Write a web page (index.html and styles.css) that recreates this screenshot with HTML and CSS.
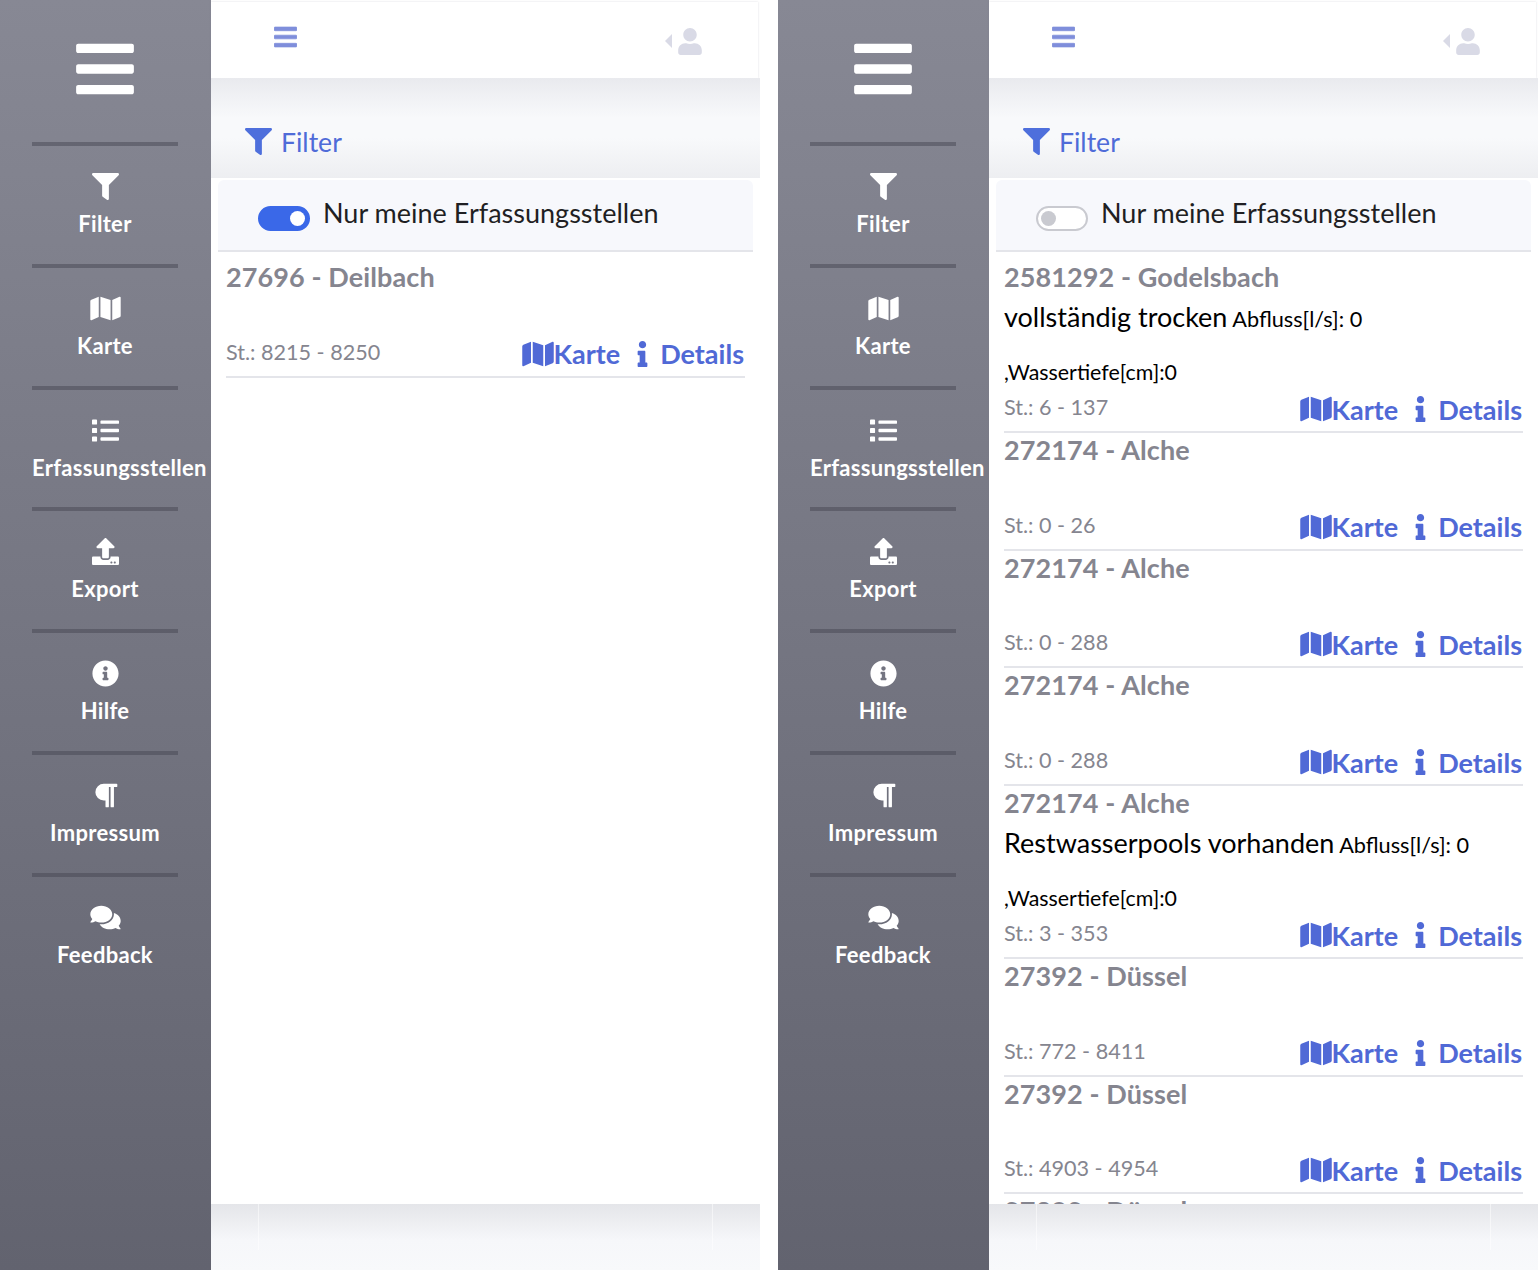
FILE: index.html
```html
<!DOCTYPE html>
<html lang="de">
<head>
  <meta charset="UTF-8" />
  <meta name="viewport" content="width=device-width, initial-scale=1" />
  <title>Erfassungsstellen</title>
  <link rel="stylesheet" href="styles.css">
</head>
<body>

<svg class="sprite" width="0" height="0">
  <symbol id="i-bars" viewBox="0 0 448 512"><path d="M16 132h416c8.837 0 16-7.163 16-16V76c0-8.837-7.163-16-16-16H16C7.163 60 0 67.163 0 76v40c0 8.837 7.163 16 16 16zm0 160h416c8.837 0 16-7.163 16-16v-40c0-8.837-7.163-16-16-16H16c-8.837 0-16 7.163-16 16v40c0 8.837 7.163 16 16 16zm0 160h416c8.837 0 16-7.163 16-16v-40c0-8.837-7.163-16-16-16H16c-8.837 0-16 7.163-16 16v40c0 8.837 7.163 16 16 16z"/></symbol>
  <symbol id="i-filter" viewBox="0 0 512 512"><path d="M487.976 0H24.028C2.71 0-8.047 25.866 7.058 40.971L192 225.941V432c0 7.831 3.821 15.17 10.237 19.662l80 55.98C298.02 518.69 320 507.493 320 487.98V225.941l184.947-184.97C520.021 25.896 509.338 0 487.976 0z"/></symbol>
  <symbol id="i-map" viewBox="0 0 576 512"><path d="M0 117.66v346.32c0 11.32 11.43 19.06 21.94 14.86L160 416V32L20.12 87.95A32.006 32.006 0 0 0 0 117.66zM192 416l192 64V96L192 32v384zM554.06 33.16L416 96v384l139.88-55.95A31.996 31.996 0 0 0 576 394.34V48.02c0-11.32-11.43-19.06-21.94-14.86z"/></symbol>
  <symbol id="i-list" viewBox="0 0 512 512"><path d="M80 368H16a16 16 0 0 0-16 16v64a16 16 0 0 0 16 16h64a16 16 0 0 0 16-16v-64a16 16 0 0 0-16-16zm0-320H16A16 16 0 0 0 0 64v64a16 16 0 0 0 16 16h64a16 16 0 0 0 16-16V64a16 16 0 0 0-16-16zm0 160H16a16 16 0 0 0-16 16v64a16 16 0 0 0 16 16h64a16 16 0 0 0 16-16v-64a16 16 0 0 0-16-16zm416 176H176a16 16 0 0 0-16 16v32a16 16 0 0 0 16 16h320a16 16 0 0 0 16-16v-32a16 16 0 0 0-16-16zm0-320H176a16 16 0 0 0-16 16v32a16 16 0 0 0 16 16h320a16 16 0 0 0 16-16V80a16 16 0 0 0-16-16zm0 160H176a16 16 0 0 0-16 16v32a16 16 0 0 0 16 16h320a16 16 0 0 0 16-16v-32a16 16 0 0 0-16-16z"/></symbol>
  <symbol id="i-upload" viewBox="0 0 512 512"><path d="M296 384h-80c-13.3 0-24-10.7-24-24V192h-87.7c-17.8 0-26.7-21.5-14.1-34.1L242.3 5.7c7.5-7.5 19.8-7.5 27.3 0l152.2 152.2c12.6 12.6 3.7 34.1-14.1 34.1H320v168c0 13.3-10.7 24-24 24zm216-8v112c0 13.3-10.7 24-24 24H24c-13.3 0-24-10.7-24-24V376c0-13.3 10.7-24 24-24h136v8c0 30.9 25.1 56 56 56h80c30.9 0 56-25.1 56-56v-8h136c13.3 0 24 10.7 24 24zm-124 88c0-11-9-20-20-20s-20 9-20 20 9 20 20 20 20-9 20-20zm64 0c0-11-9-20-20-20s-20 9-20 20 9 20 20 20 20-9 20-20z"/></symbol>
  <symbol id="i-info-circle" viewBox="0 0 512 512"><path d="M256 8C119.043 8 8 119.083 8 256c0 136.997 111.043 248 248 248s248-111.003 248-248C504 119.083 392.957 8 256 8zm0 110c23.196 0 42 18.804 42 42s-18.804 42-42 42-42-18.804-42-42 18.804-42 42-42zm56 254c0 6.627-5.373 12-12 12h-88c-6.627 0-12-5.373-12-12v-24c0-6.627 5.373-12 12-12h12v-64h-12c-6.627 0-12-5.373-12-12v-24c0-6.627 5.373-12 12-12h64c6.627 0 12 5.373 12 12v100h12c6.627 0 12 5.373 12 12v24z"/></symbol>
  <symbol id="i-paragraph" viewBox="0 0 448 512"><path d="M448 48v32a16 16 0 0 1-16 16h-48v368a16 16 0 0 1-16 16h-32a16 16 0 0 1-16-16V96h-32v368a16 16 0 0 1-16 16h-32a16 16 0 0 1-16-16V352h-32a160 160 0 0 1 0-320h240a16 16 0 0 1 16 16z"/></symbol>
  <symbol id="i-comments" viewBox="0 0 576 512"><path d="M416 192c0-88.4-93.1-160-208-160S0 103.6 0 192c0 34.3 14.1 65.9 38 92-13.4 30.2-35.5 54.2-35.8 54.5-2.2 2.3-2.8 5.7-1.5 8.7S4.8 352 8 352c36.6 0 66.9-12.3 88.7-25 32.2 15.7 70.3 25 111.3 25 114.9 0 208-71.6 208-160zm122 220c23.9-26 38-57.7 38-92 0-66.9-53.5-124.2-129.3-148.1.9 6.6 1.3 13.3 1.3 20.1 0 105.9-107.7 192-240 192-10.8 0-21.3-.8-31.7-1.9C207.8 439.6 281.8 480 368 480c41 0 79.1-9.2 111.3-25 21.8 12.7 52.1 25 88.7 25 3.2 0 6.1-1.9 7.3-4.8 1.3-2.9.7-6.3-1.5-8.7-.3-.3-22.4-24.2-35.8-54.5z"/></symbol>
  <symbol id="i-info" viewBox="0 0 192 512"><path d="M20 424.229h20V279.771H20c-11.046 0-20-8.954-20-20V212c0-11.046 8.954-20 20-20h112c11.046 0 20 8.954 20 20v212.229h20c11.046 0 20 8.954 20 20V492c0 11.046-8.954 20-20 20H20c-11.046 0-20-8.954-20-20v-47.771c0-11.046 8.954-20 20-20zM96 0C56.235 0 24 32.235 24 72s32.235 72 72 72 72-32.235 72-72S135.764 0 96 0z"/></symbol>
  <symbol id="i-user" viewBox="0 0 448 512"><path d="M224 256c70.7 0 128-57.3 128-128S294.7 0 224 0 96 57.3 96 128s57.3 128 128 128zm89.6 32h-16.7c-22.2 10.2-46.9 16-72.9 16s-50.6-5.8-72.9-16h-16.7C60.2 288 0 348.2 0 422.4V464c0 26.5 21.5 48 48 48h352c26.5 0 48-21.5 48-48v-41.6c0-74.2-60.2-134.4-134.4-134.4z"/></symbol>
</svg>

<div class="screens">

  <!-- Ansicht: nur meine -->
  <section class="phone">
    <aside class="sidebar">
      <svg class="logo-bars"><use href="#i-bars"/></svg>
      <nav>
        <div class="nav-item"><span class="nav-icon"><svg><use href="#i-filter"/></svg></span><span class="nav-label">Filter</span></div>
        <div class="nav-item"><span class="nav-icon"><svg><use href="#i-map"/></svg></span><span class="nav-label">Karte</span></div>
        <div class="nav-item"><span class="nav-icon"><svg><use href="#i-list"/></svg></span><span class="nav-label">Erfassungsstellen</span></div>
        <div class="nav-item"><span class="nav-icon"><svg><use href="#i-upload"/></svg></span><span class="nav-label">Export</span></div>
        <div class="nav-item"><span class="nav-icon"><svg><use href="#i-info-circle"/></svg></span><span class="nav-label">Hilfe</span></div>
        <div class="nav-item"><span class="nav-icon"><svg><use href="#i-paragraph"/></svg></span><span class="nav-label">Impressum</span></div>
        <div class="nav-item"><span class="nav-icon"><svg><use href="#i-comments"/></svg></span><span class="nav-label">Feedback</span></div>
      </nav>
    </aside>
    <main class="inhalt">
      <div class="topbar">
        <svg class="top-bars"><use href="#i-bars"/></svg>
        <div class="top-user"><span class="caret"></span><svg><use href="#i-user"/></svg></div>
      </div>
      <div class="filter-band">
        <svg><use href="#i-filter"/></svg>
        <span>Filter</span>
      </div>
      <div class="toggle-panel">
        <span class="toggle on"></span>
        <span class="toggle-text">Nur meine Erfassungsstellen</span>
      </div>
      <div class="liste">
        <div class="eintrag">
          <div class="eintrag-titel">27696 - Deilbach</div>
          <div class="eintrag-leer"></div>
          <div class="eintrag-meta">
            <span class="station">St.: 8215 - 8250</span>
            <span class="links">
              <a class="link-karte"><svg><use href="#i-map"/></svg>Karte</a>
              <a class="link-details"><svg><use href="#i-info"/></svg>Details</a>
            </span>
          </div>
        </div>
      </div>
      <div class="fuss"><div class="fuss-innen"></div></div>
    </main>
  </section>

  <!-- Ansicht: alle -->
  <section class="phone">
    <aside class="sidebar">
      <svg class="logo-bars"><use href="#i-bars"/></svg>
      <nav>
        <div class="nav-item"><span class="nav-icon"><svg><use href="#i-filter"/></svg></span><span class="nav-label">Filter</span></div>
        <div class="nav-item"><span class="nav-icon"><svg><use href="#i-map"/></svg></span><span class="nav-label">Karte</span></div>
        <div class="nav-item"><span class="nav-icon"><svg><use href="#i-list"/></svg></span><span class="nav-label">Erfassungsstellen</span></div>
        <div class="nav-item"><span class="nav-icon"><svg><use href="#i-upload"/></svg></span><span class="nav-label">Export</span></div>
        <div class="nav-item"><span class="nav-icon"><svg><use href="#i-info-circle"/></svg></span><span class="nav-label">Hilfe</span></div>
        <div class="nav-item"><span class="nav-icon"><svg><use href="#i-paragraph"/></svg></span><span class="nav-label">Impressum</span></div>
        <div class="nav-item"><span class="nav-icon"><svg><use href="#i-comments"/></svg></span><span class="nav-label">Feedback</span></div>
      </nav>
    </aside>
    <main class="inhalt">
      <div class="topbar">
        <svg class="top-bars"><use href="#i-bars"/></svg>
        <div class="top-user"><span class="caret"></span><svg><use href="#i-user"/></svg></div>
      </div>
      <div class="filter-band">
        <svg><use href="#i-filter"/></svg>
        <span>Filter</span>
      </div>
      <div class="toggle-panel">
        <span class="toggle"></span>
        <span class="toggle-text">Nur meine Erfassungsstellen</span>
      </div>
      <div class="liste">
        <div class="eintrag">
          <div class="eintrag-titel">2581292 - Godelsbach</div>
          <div class="eintrag-status">
            <p class="status-zeile"><span class="status-name">vollständig trocken</span> Abfluss[l/s]: 0</p>
            <p class="status-tiefe">,Wassertiefe[cm]:0</p>
          </div>
          <div class="eintrag-meta">
            <span class="station">St.: 6 - 137</span>
            <span class="links">
              <a class="link-karte"><svg><use href="#i-map"/></svg>Karte</a>
              <a class="link-details"><svg><use href="#i-info"/></svg>Details</a>
            </span>
          </div>
        </div>
        <div class="eintrag">
          <div class="eintrag-titel">272174 - Alche</div>
          <div class="eintrag-leer"></div>
          <div class="eintrag-meta">
            <span class="station">St.: 0 - 26</span>
            <span class="links">
              <a class="link-karte"><svg><use href="#i-map"/></svg>Karte</a>
              <a class="link-details"><svg><use href="#i-info"/></svg>Details</a>
            </span>
          </div>
        </div>
        <div class="eintrag">
          <div class="eintrag-titel">272174 - Alche</div>
          <div class="eintrag-leer"></div>
          <div class="eintrag-meta">
            <span class="station">St.: 0 - 288</span>
            <span class="links">
              <a class="link-karte"><svg><use href="#i-map"/></svg>Karte</a>
              <a class="link-details"><svg><use href="#i-info"/></svg>Details</a>
            </span>
          </div>
        </div>
        <div class="eintrag">
          <div class="eintrag-titel">272174 - Alche</div>
          <div class="eintrag-leer"></div>
          <div class="eintrag-meta">
            <span class="station">St.: 0 - 288</span>
            <span class="links">
              <a class="link-karte"><svg><use href="#i-map"/></svg>Karte</a>
              <a class="link-details"><svg><use href="#i-info"/></svg>Details</a>
            </span>
          </div>
        </div>
        <div class="eintrag">
          <div class="eintrag-titel">272174 - Alche</div>
          <div class="eintrag-status">
            <p class="status-zeile"><span class="status-name">Restwasserpools vorhanden</span> Abfluss[l/s]: 0</p>
            <p class="status-tiefe">,Wassertiefe[cm]:0</p>
          </div>
          <div class="eintrag-meta">
            <span class="station">St.: 3 - 353</span>
            <span class="links">
              <a class="link-karte"><svg><use href="#i-map"/></svg>Karte</a>
              <a class="link-details"><svg><use href="#i-info"/></svg>Details</a>
            </span>
          </div>
        </div>
        <div class="eintrag">
          <div class="eintrag-titel">27392 - Düssel</div>
          <div class="eintrag-leer"></div>
          <div class="eintrag-meta">
            <span class="station">St.: 772 - 8411</span>
            <span class="links">
              <a class="link-karte"><svg><use href="#i-map"/></svg>Karte</a>
              <a class="link-details"><svg><use href="#i-info"/></svg>Details</a>
            </span>
          </div>
        </div>
        <div class="eintrag">
          <div class="eintrag-titel">27392 - Düssel</div>
          <div class="eintrag-leer"></div>
          <div class="eintrag-meta">
            <span class="station">St.: 4903 - 4954</span>
            <span class="links">
              <a class="link-karte"><svg><use href="#i-map"/></svg>Karte</a>
              <a class="link-details"><svg><use href="#i-info"/></svg>Details</a>
            </span>
          </div>
        </div>
        <div class="eintrag">
          <div class="eintrag-titel">27392 - Düssel</div>
        </div>
      </div>
      <div class="fuss"><div class="fuss-innen"></div></div>
    </main>
  </section>

</div>

</body>
</html>
```

FILE: styles.css
```css
html, body {
  margin: 0;
  padding: 0;
  background: #fff;
}

body {
  font-family: "Lato", "Noto Sans", sans-serif;
  color: #000;
}

.sprite {
  position: absolute;
}

svg {
  fill: currentColor;
  display: block;
}

.screens {
  display: flex;
  gap: 18px;
  width: 1538px;
  height: 1270px;
  overflow: hidden;
}

.phone {
  display: flex;
  width: 760px;
  height: 1270px;
  flex: none;
}

/* Seitenleiste */
.sidebar {
  width: 211px;
  flex: none;
  padding-top: 36px;
  box-sizing: border-box;
  color: #fff;
  background: linear-gradient(180deg, #878894 0%, #62636f 100%);
}

.logo-bars {
  width: 58px;
  height: 66px;
  margin: 0 0 40px 76px;
}

.sidebar nav {
  width: 146px;
  margin-left: 32px;
}

.nav-item {
  border-top: 4px solid rgba(70, 70, 82, 0.5);
  padding-top: 27px;
  height: 90.83px;
  text-align: center;
}

.nav-icon {
  display: flex;
  justify-content: center;
  height: 28px;
  margin-bottom: 8px;
}

.nav-icon svg {
  width: 31px;
  height: 27px;
}

.nav-label {
  display: block;
  font-size: 22px;
  font-weight: 700;
  letter-spacing: 0.3px;
  line-height: 30px;
  white-space: nowrap;
}

/* Inhalt */
.inhalt {
  flex: 1;
  display: flex;
  flex-direction: column;
  min-width: 0;
}

.topbar {
  height: 76px;
  margin: 2px 2px 0 0;
  flex: none;
  display: flex;
  justify-content: space-between;
  padding: 22px 56px 0 63px;
  box-sizing: border-box;
  background: #fff;
  box-shadow: 0 0 2px rgba(120, 120, 135, 0.25);
}

.top-bars {
  width: 23px;
  height: 26px;
  color: #7f8edb;
  stroke: currentColor;
  stroke-width: 14;
}

.top-user {
  display: flex;
  align-items: center;
  height: 34px;
  gap: 6px;
  color: #d9dae6;
}

.top-user svg {
  width: 24px;
  height: 27px;
}

.caret {
  width: 0;
  height: 0;
  border-top: 7px solid transparent;
  border-bottom: 7px solid transparent;
  border-right: 7px solid #d9dae6;
}

.filter-band {
  height: 100px;
  flex: none;
  display: flex;
  align-items: center;
  gap: 9px;
  padding: 26px 0 0 34px;
  box-sizing: border-box;
  color: #4f6bd8;
  font-size: 26.6px;
  background: linear-gradient(180deg, #e9eaee 0%, #f8f9fb 40%, #f8f9fb 60%, #edeef1 100%);
}

.filter-band svg {
  width: 27px;
  height: 27px;
  color: #4e6fdc;
}

.filter-band span {
  margin-top: 2px;
}

.toggle-panel {
  height: 72px;
  margin: 2px 7px 0;
  flex: none;
  display: flex;
  align-items: flex-start;
  padding-left: 40px;
  box-sizing: border-box;
  background: #f7f8fc;
  border-bottom: 2px solid #e4e5ea;
  border-radius: 6px 6px 0 0;
}

.toggle {
  position: relative;
  width: 52px;
  height: 25px;
  margin-top: 26px;
  flex: none;
  box-sizing: border-box;
  background: #fff;
  border: 2px solid #c9cad0;
  border-radius: 13px;
}

.toggle::after {
  content: "";
  position: absolute;
  left: 3px;
  top: 3px;
  width: 15px;
  height: 15px;
  border-radius: 50%;
  background: #c9cad0;
}

.toggle.on {
  background: #3a68e8;
  border-color: #3a68e8;
}

.toggle.on::after {
  left: auto;
  right: 3px;
  background: #fff;
}

.toggle-text {
  margin: 14px 0 0 13px;
  font-size: 27px;
  line-height: 38px;
  color: #1f1f23;
  white-space: nowrap;
}

.liste {
  flex: 1;
  min-height: 0;
  overflow: hidden;
  padding: 8px 15px 0;
  background: #fff;
}

.eintrag {
  border-bottom: 2px solid #e4e5ea;
}

.eintrag-titel {
  font-size: 27px;
  font-weight: 700;
  letter-spacing: 0.1px;
  line-height: 34px;
  color: #85858f;
}

.eintrag-leer {
  height: 38.7px;
}

.eintrag-status {
  height: 94px;
  box-sizing: border-box;
  padding-top: 4px;
}

.eintrag-status p {
  margin: 0;
  white-space: nowrap;
}

.status-zeile {
  font-size: 21.7px;
  line-height: 38px;
}

.status-name {
  font-size: 27px;
}

.status-tiefe {
  margin-top: 19px !important;
  font-size: 21.4px;
  line-height: 30px;
}

.eintrag-meta {
  height: 43px;
  display: flex;
  justify-content: space-between;
  align-items: flex-start;
}

.station {
  font-size: 21.6px;
  line-height: 38px;
  color: #85858f;
}

.links {
  display: flex;
  align-items: center;
  gap: 17px;
  height: 42px;
  padding-right: 1px;
  font-size: 27px;
  font-weight: 700;
  color: #5069d6;
}

.links a {
  display: flex;
  align-items: center;
}

.link-karte svg {
  width: 32px;
  height: 28px;
}

.link-details svg {
  width: 11px;
  height: 26px;
  margin-right: 12px;
}

.fuss {
  height: 66px;
  flex: none;
  background: linear-gradient(180deg, #e4e5e9 0%, #f6f7fa 55%, #f8f9fb 100%);
}

.fuss-innen {
  height: 46px;
  margin: 0 47px;
  border-left: 1px solid rgba(255, 255, 255, 0.5);
  border-right: 1px solid rgba(255, 255, 255, 0.5);
}
```
